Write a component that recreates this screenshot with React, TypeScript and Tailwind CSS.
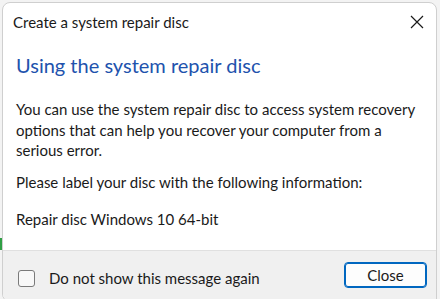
export default function App() {
    return (
        <div className="w-[440px] h-[299px] bg-[#f3f3f3] overflow-hidden relative" style={{ fontFamily: "Lato, 'Noto Sans', sans-serif" }}>
            <div className="absolute left-0 top-[238px] w-[2px] h-[12px] bg-[#2f9e44]" />
            <div className="ml-[2px] mt-[2px] w-[435px] h-[300px] rounded-t-[8px] rounded-bl-[8px] border border-[#cfcfcf] bg-white overflow-hidden flex flex-col">
                <div className="h-[38px] flex items-center justify-between pl-[10px] pr-[10px]">
                    <span className="text-[15px] text-[#1a1a1a]">Create a system repair disc</span>
                    <svg width="14" height="14" viewBox="0 0 14 14" className="mr-[2px]">
                        <path d="M1 1L13 13M13 1L1 13" stroke="#1a1a1a" strokeWidth="1.2" />
                    </svg>
                </div>

                <div className="flex-1 pl-[13px] pr-[10px]">
                    <h1 className="mt-[11px] text-[20px] leading-[26px] text-[#2152ad]">
                        Using the system repair disc
                    </h1>
                    <p className="mt-[21px] text-[15px] leading-[20.5px] text-[#1a1a1a] w-[410px]">
                        You can use the system repair disc to access system recovery options that can help you recover your computer from a serious error.
                    </p>
                    <p className="mt-[11px] text-[15px] leading-[20px] text-[#1a1a1a]">
                        Please label your disc with the following information:
                    </p>
                    <p className="mt-[17px] text-[15px] leading-[20px] text-[#1a1a1a]">
                        Repair disc Windows 10 64-bit
                    </p>
                </div>

                <div className="h-[51px] shrink-0 border-t border-[#e0e0e0] bg-[#f0f0f0] flex items-start justify-between pt-[11px] pl-[15px] pr-[9px]">
                    <label className="flex items-center gap-[14px] mt-[5px]">
                        <span className="w-[17px] h-[17px] rounded-[3px] border border-[#7a7a7a] bg-[#f8f8f8]" />
                        <span className="text-[15px] text-[#1a1a1a]">Do not show this message again</span>
                    </label>
                    <button className="w-[83px] h-[26px] rounded-[4px] border border-[#0067c0] bg-[#fdfdfd] text-[15px] text-[#1a1a1a] shadow-[inset_0_0_0_1px_#0067c0]">
                        Close
                    </button>
                </div>
            </div>
        </div>
    );
}
